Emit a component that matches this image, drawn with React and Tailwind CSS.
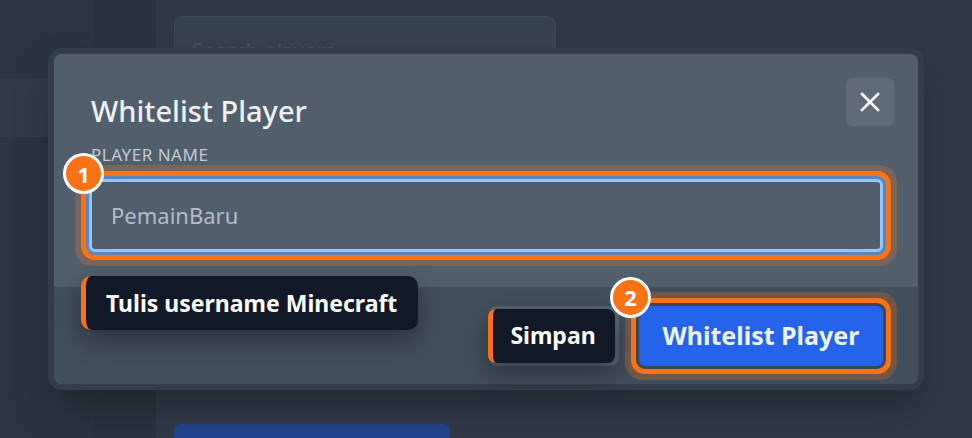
import React from "react";

function Badge({ n }) {
  return (
    <div className="absolute -left-[29px] -top-[29px] z-20 flex h-[41px] w-[41px] items-center justify-center rounded-full border-[3px] border-white bg-[#f97316] text-[22px] font-bold leading-none text-white">
      {n}
    </div>
  );
}

export default function App() {
  return (
    <div
      className="relative h-[438px] w-[972px] overflow-hidden bg-[#2f3945]"
      style={{ fontFamily: '"Noto Sans", "Open Sans", sans-serif' }}
    >
      {/* underlying page */}
      <div className="flex h-full">
        <aside className="flex h-full w-[156px] border-r border-[#2b343f] bg-[#2a333e]">
          <div className="flex w-[95px] flex-col border-r border-[#29323c] bg-[#2b3440]">
            <div className="h-[78px]" />
            <div className="h-[59px] bg-[#313b47]" />
          </div>
          <div className="flex flex-1 flex-col">
            <div className="h-[78px]" />
            <div className="h-[59px] bg-[#303a46]" />
          </div>
        </aside>
        <main className="flex flex-1 flex-col pl-[18px] pt-[16px]">
          <div className="flex h-[60px] w-[382px] items-start rounded-lg border border-[#3d4856] bg-[#374250] px-[17px] pt-[20px] text-[21px] leading-[28px] text-[#46515e]">
            Search players
          </div>
          <div className="flex-1" />
          <div className="h-[14px] w-[276px] rounded-t-md bg-[#23448e]" />
        </main>
      </div>

      {/* modal */}
      <div className="absolute left-[54px] top-[54px] flex h-[330px] w-[864px] flex-col rounded-lg bg-[#515f6d] shadow-[0_0_0_6px_#333e4a,0_20px_40px_rgba(0,0,0,0.3)]">
        <div className="relative flex h-[233px] flex-col px-[35px]">
          <div className="flex items-start justify-between pt-[24px]">
            <h2 className="mt-[15px] pl-[2px] text-[29px] font-medium leading-[36px] text-[#eef2f6]">
              Whitelist Player
            </h2>
            <button className="-mr-[11px] flex h-[48px] w-[48px] items-center justify-center rounded-md bg-[#5f6b79]">
              <svg width="20" height="20" viewBox="0 0 20 20" fill="none">
                <path d="M2 2L18 18M18 2L2 18" stroke="white" strokeWidth="2.6" strokeLinecap="square" />
              </svg>
            </button>
          </div>
          <label className="mt-[14px] pl-[2px] text-[17px] uppercase leading-[24px] tracking-[0.03em] text-[#c3cad2]">
            Player name
          </label>
          <div className="relative mt-[12px] flex h-[73px] items-center rounded-md border-[3px] border-[#93c5fd] bg-[#515f6d] pl-[19px] text-[22px] text-[#b4bcc5] shadow-[0_0_0_3px_#5a86c0,0_0_0_8px_#f97316,0_0_0_14px_rgba(249,115,22,0.26)]">
            <Badge n="1" />
            PemainBaru
          </div>
          <div className="absolute left-[27px] top-[222px] z-10 flex h-[54px] w-[337px] items-center rounded-[10px] border-l-[5px] border-[#f97316] bg-[#111827] pl-[20px] text-[23px] font-bold text-white shadow-[0_10px_25px_rgba(0,0,0,0.35)]">
            Tulis username Minecraft
          </div>
        </div>
        <div className="flex flex-1 items-center justify-end gap-[20px] rounded-b-lg bg-[#414e5b] pr-[35px]">
          <div className="flex h-[60px] w-[130px] rounded-lg bg-[#58636e] pb-[3px] pr-[4px] pt-[3px]">
            <div className="-ml-[1px] flex flex-1 items-center justify-center rounded-lg border-l-[5px] border-[#f97316] bg-[#111827] pr-[2px] text-[23px] font-bold text-white shadow-[0_10px_25px_rgba(0,0,0,0.35)]">
              Simpan
            </div>
          </div>
          <button className="relative flex h-[60px] w-[244px] items-center justify-center rounded-md bg-[#2563eb] text-[25px] font-bold text-[#eef4ff] shadow-[0_0_0_3px_#3d4856,0_0_0_8px_#f97316,0_0_0_14px_rgba(249,115,22,0.26)]">
            <Badge n="2" />
            Whitelist Player
          </button>
        </div>
      </div>
    </div>
  );
}
